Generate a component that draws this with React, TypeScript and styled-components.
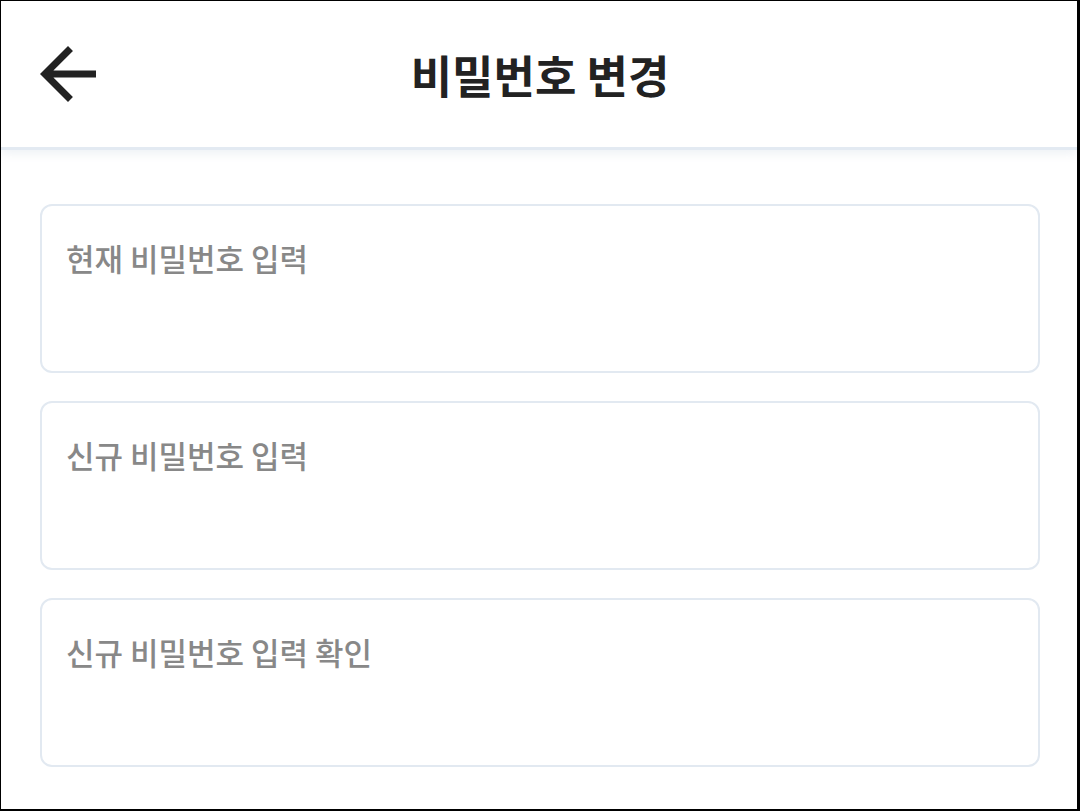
import React from "react";
import styled, { createGlobalStyle } from "styled-components";

const Global = createGlobalStyle`
  html, body { margin: 0; padding: 0; background: #ffffff; }
  * { box-sizing: border-box; }
`;

const Frame = styled.div`
  width: 1080px;
  height: 811px;
  border-style: solid;
  border-color: #000;
  border-width: 1px 3px 2px 1px;
  background: #fff;
  display: flex;
  flex-direction: column;
  overflow: hidden;
  font-family: "Noto Sans CJK KR", "Noto Sans", sans-serif;
`;

const Header = styled.header`
  height: 149px;
  flex: none;
  display: grid;
  grid-template-columns: 1fr auto 1fr;
  align-items: center;
  padding: 0 23px 0 25px;
  border-bottom: 3px solid #e3eaf2;
  box-shadow: 0 3px 10px rgba(160, 178, 200, 0.2);
  position: relative;
  z-index: 1;
`;

const BackButton = styled.button`
  width: 84px;
  height: 84px;
  padding: 0;
  margin: 0;
  border: none;
  background: transparent;
  display: flex;
  align-items: center;
  justify-content: center;
  justify-self: start;
  cursor: pointer;
  color: #222;
`;

const Title = styled.h1`
  margin: 0;
  font-size: 45px;
  font-weight: 700;
  color: #222;
  letter-spacing: 0;
  line-height: 1;
`;

const Main = styled.main`
  flex: 1;
  display: flex;
  flex-direction: column;
  gap: 28px;
  padding: 54px 37px 0 39px;
`;

const Field = styled.textarea`
  display: block;
  width: 100%;
  height: 169px;
  resize: none;
  border: 2px solid #e2e9f1;
  border-radius: 12px;
  padding: 29px 24px;
  font-family: "Noto Sans CJK KR", "Noto Sans", sans-serif;
  font-size: 31px;
  font-weight: 500;
  color: #333;
  outline: none;
  background: #fff;
  &::placeholder {
    color: #888888;
  }
`;

const ArrowBack = () => (
  <svg width="84" height="84" viewBox="0 0 24 24" fill="currentColor" aria-hidden="true">
    <path d="M20 11H7.83l5.59-5.59L12 4l-8 8 8 8 1.41-1.41L7.83 13H20v-2z" />
  </svg>
);

const fields = ["현재 비밀번호 입력", "신규 비밀번호 입력", "신규 비밀번호 입력 확인"];

export default function App() {
  return (
    <>
      <Global />
      <Frame>
        <Header>
          <BackButton aria-label="뒤로">
            <ArrowBack />
          </BackButton>
          <Title>비밀번호 변경</Title>
          <span />
        </Header>
        <Main>
          {fields.map((f) => (
            <Field key={f} placeholder={f} />
          ))}
        </Main>
      </Frame>
    </>
  );
}
